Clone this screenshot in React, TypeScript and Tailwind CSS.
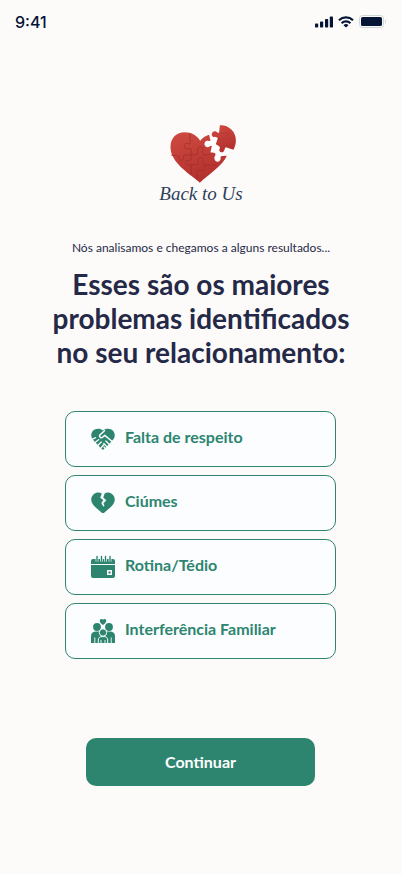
import type { ReactNode } from "react";

function SignalIcon() {
  return (
    <svg width="18" height="12" viewBox="0 0 18 12" fill="currentColor" aria-hidden="true">
      <rect x="0" y="7.500" width="3.200" height="4" rx="0.8" />
      <rect x="5" y="5.500" width="3.200" height="6" rx="0.8" />
      <rect x="10" y="3" width="3.200" height="8.500" rx="0.8" />
      <rect x="14.800" y="0.500" width="3.200" height="11" rx="0.8" />
    </svg>
  );
}

function WifiIcon() {
  return (
    <svg width="16" height="12" viewBox="0 0 16 12" fill="none" stroke="currentColor" strokeWidth="2.200" aria-hidden="true">
      <path d="M1 4.200a10.200 10.200 0 0 1 14 0" />
      <path d="M3.600 7.200a6.400 6.400 0 0 1 8.800 0" />
      <path d="M8 11.600 5.500 9.200a3.500 3.500 0 0 1 5 0Z" fill="currentColor" stroke="none" />
    </svg>
  );
}

function BatteryIcon() {
  return (
    <svg width="27" height="13" viewBox="0 0 27 13" aria-hidden="true">
      <rect x="0.5" y="0.5" width="24" height="12" rx="3" fill="none" stroke="#cbd5d3" />
      <rect x="2" y="2" width="21" height="9" rx="1.6" fill="currentColor" />
      <path d="M26 4.500v4c.7-.3 1-1.100 1-2s-.3-1.700-1-2Z" fill="#cbd5d3" />
    </svg>
  );
}

function HeartLogo() {
  return (
    <svg viewBox="56 28 206 180" className="h-[60px] w-[69px]" aria-hidden="true">
      <defs>
        <linearGradient id="heart" x1="0" y1="0" x2="0.3" y2="1">
          <stop offset="0" stopColor="#cf4a40" />
          <stop offset="1" stopColor="#b5312f" />
        </linearGradient>
      </defs>
      <path fill="#fff" d="M176 60L202 66L196 90L236 104L228 125L205 142L180 115L160 92Z" />
      <path
        fill="url(#heart)"
        d="M148 204C122 180 60 146 60 97C60 69 79 53 102 53C124 53 139 63 149 78C156 69 165 63 176 60L180 78C174 80 170 77 166 80C158 86 163 97 171 98C177 98 179 92 184 94L180 113C188 115 196 113 195 121C190 128 190 137 199 141C207 143 212 136 210 128C211 122 220 124 229 123C218 151 171 182 148 204Z"
      />
      <g fill="none" stroke="#9a2d2b" strokeWidth="2" strokeLinejoin="round">
        <path d="M61 121C73 124 84 121 85 126C84 132 87 138 94 137C101 135 101 127 98 122C107 118 115 122 122 121V103C117 99 108 106 103 100C98 92 105 83 112 87C117 90 119 88 119 82V56" />
        <path d="M122 121C129 119 138 122 143 117C143 110 138 106 143 99C149 94 158 98 158 105C157 111 153 114 157 120C165 124 174 118 181 119" />
        <path d="M122 121V135C116 139 109 134 106 142C106 150 114 154 122 150V180M122 150C134 148 139 154 143 148C146 141 139 137 144 131C150 126 159 130 158 138C155 144 154 151 163 151H199" />
        <path d="M163 151C161 160 165 164 159 168C151 171 147 162 140 168V194" />
      </g>
      <path
        fill="url(#heart)"
        d="M208 32C238 29 271 61 249 105L226 98C221 102 223 111 216 113C208 114 204 107 208 101C210 95 201 93 196 89L202 70C196 65 189 70 185 64C181 57 187 48 195 50C201 52 203 58 206 53Z"
      />
      <path
        d="M208 54C216 54 225 60 230 51M230 50C239 55 226 66 234 72C241 75 246 70 251 75M202 70C210 77 222 69 228 77"
        fill="none"
        stroke="#a93a35"
        strokeWidth="2"
      />
    </svg>
  );
}

function RespectIcon() {
  return (
    <svg width="24" height="24" viewBox="0 0 24 24" className="shrink-0" aria-hidden="true">
      <path
        fill="currentColor"
        d="M12 3.600C9.700 1.300 6 1 3.200 2.800C.1 4.800-.5 8.700 1.200 11.700L4 15L10.700 22C11.500 22.700 12.500 22.700 13.300 22L20 15L22.800 11.700C24.500 8.700 23.900 4.800 20.800 2.800C18 1 14.300 1.300 12 3.600Z"
      />
      <g fill="none" stroke="#fbfdff" strokeLinecap="round" strokeLinejoin="round">
        <path strokeWidth="1.500" d="M13.500 3.700 8.600 8.300C8 10.600 10.500 11.500 12.200 9.800L13.800 8.400L21.800 15" />
        <path strokeWidth="1.300" d="M1 12.300 4.500 10.700M3.800 15.700 7.800 12.600M6.700 18.500 10.300 15M9.700 21.400 12.400 18M14.800 14 19.200 18.200M12.800 16.500 16.700 20.500M13 20 15 22.500" />
      </g>
    </svg>
  );
}

function BrokenHeartIcon() {
  return (
    <svg width="24" height="24" viewBox="0 0 24 24" className="shrink-0" aria-hidden="true">
      <path
        fill="currentColor"
        d="M10.800 2.500 9.200 6.800L12.300 9L10.300 12.300L12.500 15.800L13.500 14.600L12.400 12.400L15.300 9.200L12.200 6.500L13.800 2.300C16.100 1.100 19.200 1.400 21.300 3.200C24.200 5.700 24.500 9.700 22.500 12.700C20.300 16 16.500 18.900 13.500 21.500C12.600 22.300 11.400 22.300 10.500 21.500C7.500 18.900 3.700 16 1.500 12.700C-.5 9.700-.2 5.700 2.700 3.200C5 1.200 8.300 1 10.800 2.500Z"
      />
    </svg>
  );
}

function CalendarIcon() {
  return (
    <svg width="24" height="24" viewBox="0 0 24 24" className="shrink-0" aria-hidden="true">
      <path fill="currentColor" d="M2 4H22Q24 4 24 6V9H0V6Q0 4 2 4ZM0 10H24V21Q24 23 22 23H2Q0 23 0 21Z" />
      <path d="M6 2V6.500M10.500 2V6.500M14.500 2V6.500M19 2V6.500" stroke="#fbfdff" strokeWidth="2.800" />
      <path d="M6 1.500V6M10.500 1.500V6M14.500 1.500V6M19 1.500V6" stroke="currentColor" strokeWidth="1.400" strokeLinecap="round" />
      <rect x="16" y="15" width="5" height="5" fill="#fbfdff" />
      <rect x="17.500" y="16.500" width="2" height="2" fill="currentColor" />
    </svg>
  );
}

function FamilyIcon() {
  return (
    <svg width="24" height="24" viewBox="0 0 24 24" className="shrink-0" fill="currentColor" aria-hidden="true">
      <path d="M12 6C10 4.500 8.800 3.400 8.800 2C8.800 0 11-.5 12 .7C13-.5 15.200 0 15.200 2C15.200 3.400 14 4.500 12 6Z" />
      <circle cx="6" cy="8" r="3.900" />
      <circle cx="18" cy="8" r="3.900" />
      <path d="M0 24V17C0 14 2 12.500 5 12.500H8.500L12 17L15.500 12.500H19C22 12.500 24 14 24 17V24H0Z" />
      <circle cx="12" cy="13.500" r="3.700" stroke="#fbfdff" strokeWidth="1" />
      <path d="M7.300 24V21C7.300 18.700 8.800 17.600 11 17.600H13C15.200 17.600 16.700 18.700 16.700 21V24" stroke="#fbfdff" strokeWidth="1" />
      <path d="M3.800 18.500V24M20.200 18.500V24M10 21V24M14 21V24" stroke="#fbfdff" strokeWidth="0.900" />
    </svg>
  );
}

const PROBLEMS: { label: string; icon: ReactNode }[] = [
  { label: "Falta de respeito", icon: <RespectIcon /> },
  { label: "Ciúmes", icon: <BrokenHeartIcon /> },
  { label: "Rotina/Tédio", icon: <CalendarIcon /> },
  { label: "Interferência Familiar", icon: <FamilyIcon /> },
];

function StatusBar() {
  return (
    <header className="flex h-11 items-center justify-between pl-[15px] pr-4 text-[#051535]">
      <span className="font-['Inter',sans-serif] text-base font-medium">9:41</span>
      <div className="flex items-center gap-[5px] pb-px">
        <SignalIcon />
        <WifiIcon />
        <BatteryIcon />
      </div>
    </header>
  );
}

export default function App() {
  return (
    <div className="min-h-screen bg-[#fdfbf9] font-['Lato',sans-serif] text-[#252948]">
      <StatusBar />
      <main className="flex flex-col items-center pb-22 pt-20">
        <div className="flex flex-col items-center">
          <div className="pl-1">
            <HeartLogo />
          </div>
          <p className="font-['Liberation_Serif',serif] text-[19px] leading-5 italic text-[#2f405b]">Back to Us</p>
        </div>
        <p className="mt-9 text-xs leading-4">Nós analisamos e chegamos a alguns resultados...</p>
        <h1 className="mt-[11px] px-10 text-center text-[28px] leading-[34px] font-bold">
          Esses são os maiores problemas identificados no seu relacionamento:
        </h1>
        <ul className="mt-[42px] flex w-full flex-col gap-2 pl-[65px] pr-[66px]">
          {PROBLEMS.map((item) => (
            <li
              key={item.label}
              className="flex h-14 items-center gap-2.5 rounded-[10px] border border-[#2d856f] bg-[#fbfdff] px-[25px] text-[#2d856f]"
            >
              {item.icon}
              <span className="pb-1 text-base font-bold">{item.label}</span>
            </li>
          ))}
        </ul>
        <div className="mt-[79px] w-full pl-[86px] pr-[87px]">
          <button
            type="button"
            className="h-12 w-full cursor-pointer rounded-[10px] bg-[#2d856f] text-base font-bold text-white"
          >
            Continuar
          </button>
        </div>
      </main>
    </div>
  );
}
